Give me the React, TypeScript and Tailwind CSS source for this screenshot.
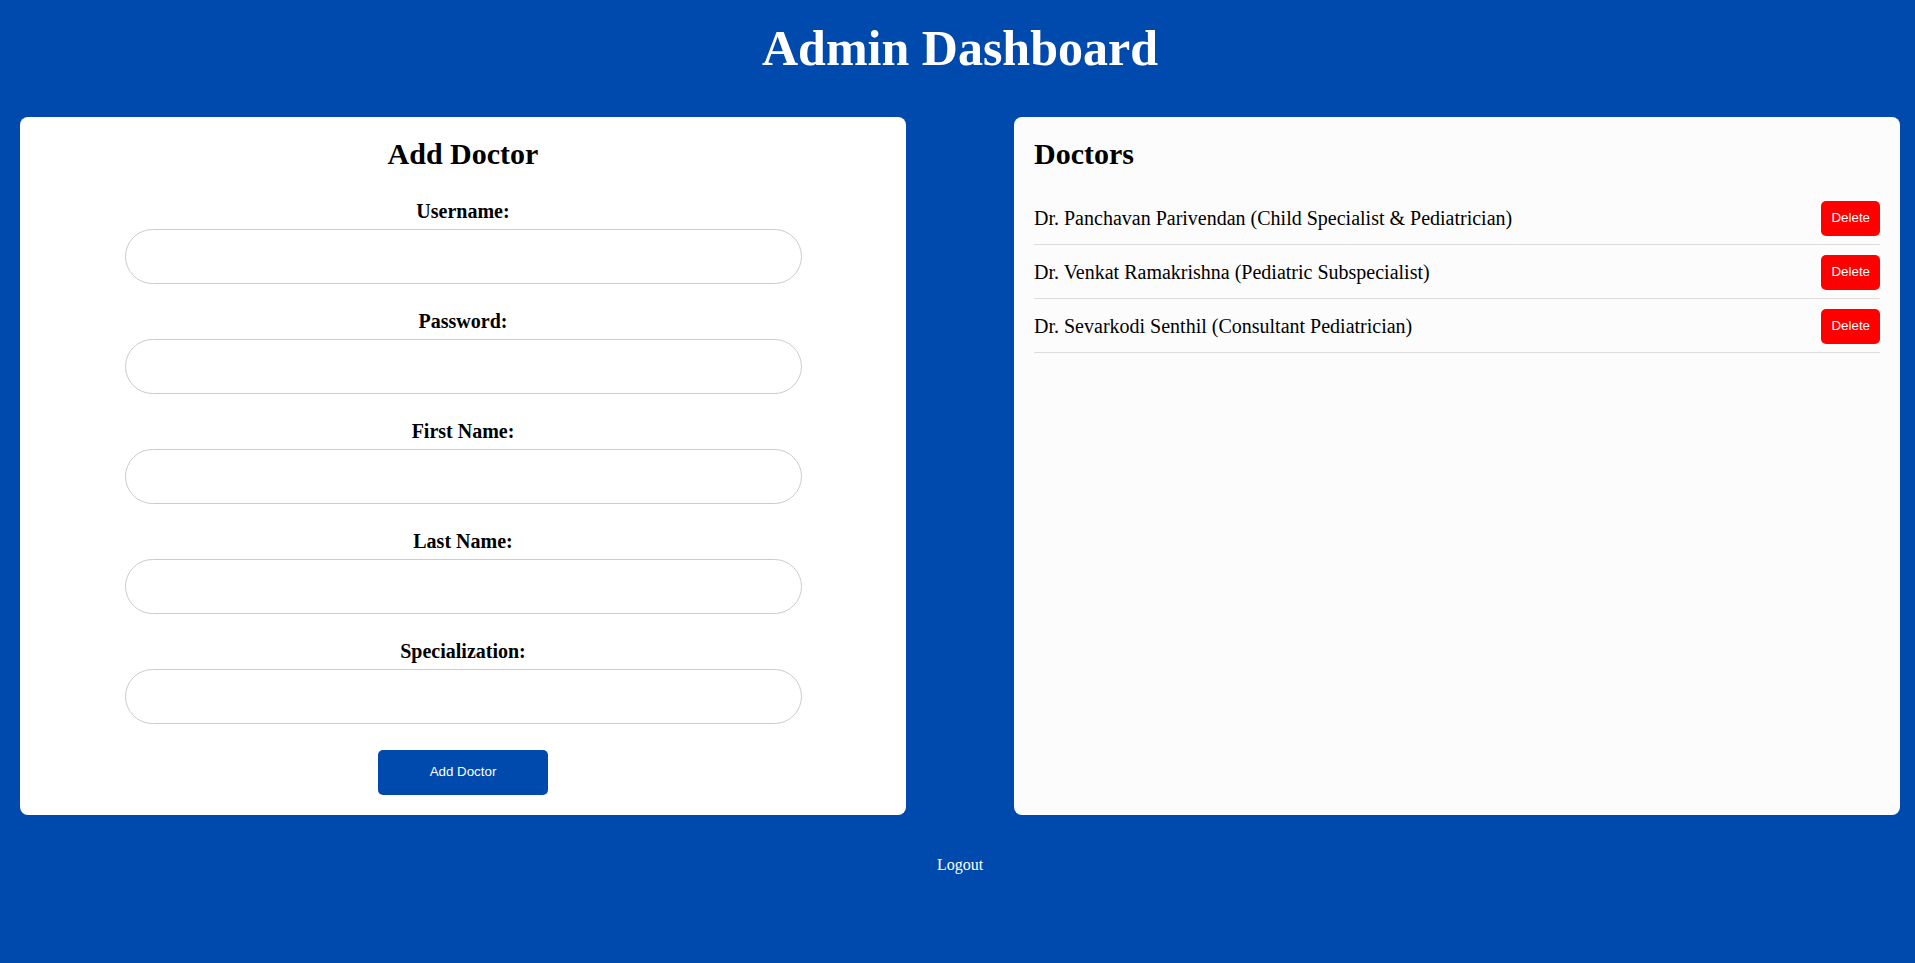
const serif = { fontFamily: '"Liberation Serif", "Times New Roman", serif' };

const fields = ['Username', 'Password', 'First Name', 'Last Name', 'Specialization'];

const doctors = [
  'Dr. Panchavan Parivendan (Child Specialist & Pediatrician)',
  'Dr. Venkat Ramakrishna (Pediatric Subspecialist)',
  'Dr. Sevarkodi Senthil (Consultant Pediatrician)',
];

export default function App() {
  return (
    <div className="min-h-screen w-full overflow-hidden bg-[#004aad]">
      <div className="w-[1920px] px-[20px] pt-[19px] pb-[40px] font-['Liberation_Serif',serif]">
        <h1 className="mb-[40px] text-center text-[50px] font-bold leading-[58px] text-white">Admin Dashboard</h1>

        <div className="flex justify-between">
          {/* add doctor form */}
          <div className="w-[886px] rounded-lg bg-white p-[20px]">
            <h2 className="mb-[28px] text-center text-[30px] font-bold leading-[1.15] text-black">Add Doctor</h2>
            <form className="flex flex-col items-center" onSubmit={(e) => e.preventDefault()}>
              {fields.map((f) => (
                <div key={f} className="mb-[26px] flex w-full flex-col items-center last:mb-[28px]">
                  <label className="mb-[6px] text-[20px] font-bold leading-[23px] text-black">{f}:</label>
                  <input
                    type={f === 'Password' ? 'password' : 'text'}
                    className="h-[55px] w-[677px] rounded-full border border-[#cccccc] bg-white px-5 outline-none"
                  />
                </div>
              ))}
              <button
                type="submit"
                className="h-[45px] w-[170px] rounded-[5px] bg-[#004aad] font-['Liberation_Sans',Arial,sans-serif] text-[13.33px] text-white"
              >
                Add Doctor
              </button>
            </form>
          </div>

          {/* doctor list */}
          <div className="w-[886px] rounded-lg bg-[#fcfcfc] p-[20px]">
            <h2 className="mb-[19px] text-[30px] font-bold leading-[1.15] text-black">Doctors</h2>
            <ul>
              {doctors.map((d) => (
                <li key={d} className="flex items-center justify-between border-b border-[#dddddd] pt-[10px] pb-[8px]">
                  <span className="text-[20px] leading-[23px] text-black" style={serif}>{d}</span>
                  <button className="h-[35px] rounded-[5px] bg-[#ff0000] px-[10px] font-['Liberation_Sans',Arial,sans-serif] text-[13.33px] text-white">
                    Delete
                  </button>
                </li>
              ))}
            </ul>
          </div>
        </div>

        <div className="mt-[38px] text-center">
          <a href="#" className="text-[16px] text-white">Logout</a>
        </div>
      </div>
    </div>
  );
}
